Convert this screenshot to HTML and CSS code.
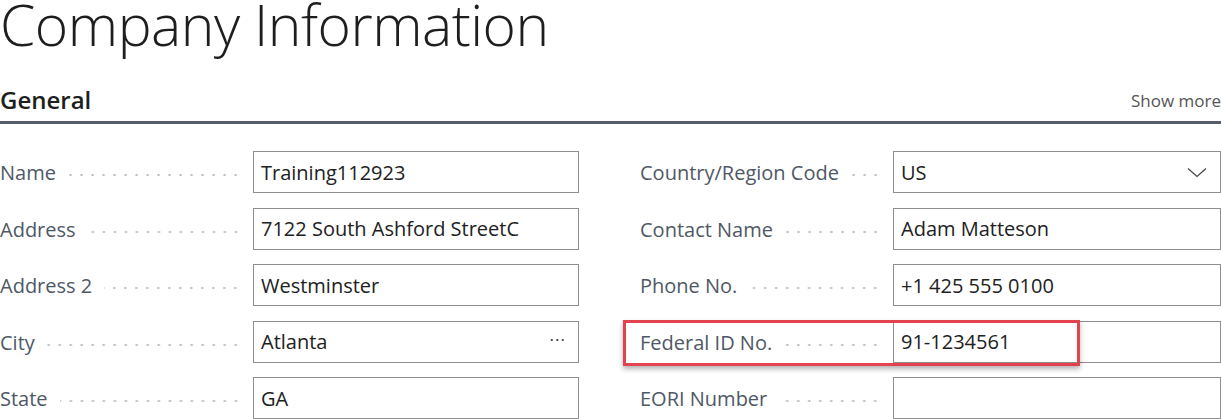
FILE: index.html
```html
<!DOCTYPE html>
<html lang="en">
<head>
    <meta charset="UTF-8">
    <title>Company Information</title>
    <link rel="stylesheet" href="styles.css">
</head>
<body>
    <div class="page">
        <h1 class="title">Company Information</h1>

        <!-- Section header -->
        <div class="section-head">
            <h2>General</h2>
            <span class="show-more">Show more</span>
        </div>

        <div class="fields">
            <!-- Left column -->
            <div class="col">
                <div class="row">
                    <label class="caption"><span>Name</span><i class="dots"></i></label>
                    <div class="box"><span>Training112923</span></div>
                </div>
                <div class="row">
                    <label class="caption"><span>Address</span><i class="dots"></i></label>
                    <div class="box"><span>7122 South Ashford StreetC</span></div>
                </div>
                <div class="row">
                    <label class="caption"><span>Address 2</span><i class="dots"></i></label>
                    <div class="box"><span>Westminster</span></div>
                </div>
                <div class="row">
                    <label class="caption"><span>City</span><i class="dots"></i></label>
                    <div class="box"><span>Atlanta</span><span class="more">···</span></div>
                </div>
                <div class="row">
                    <label class="caption"><span>State</span><i class="dots"></i></label>
                    <div class="box"><span>GA</span></div>
                </div>
            </div>

            <!-- Right column -->
            <div class="col">
                <div class="row">
                    <label class="caption"><span>Country/Region Code</span><i class="dots"></i></label>
                    <div class="box">
                        <span>US</span>
                        <svg class="chevron" width="20" height="11" viewBox="0 0 20 11">
                            <path d="M1 1.5 L10 9.5 L19 1.5" fill="none" stroke="#444" stroke-width="1.2"/>
                        </svg>
                    </div>
                </div>
                <div class="row">
                    <label class="caption"><span>Contact Name</span><i class="dots"></i></label>
                    <div class="box"><span>Adam Matteson</span></div>
                </div>
                <div class="row">
                    <label class="caption"><span>Phone No.</span><i class="dots"></i></label>
                    <div class="box"><span>+1 425 555 0100</span></div>
                </div>
                <div class="row highlighted">
                    <label class="caption"><span>Federal ID No.</span><i class="dots"></i></label>
                    <div class="box"><span>91-1234561</span></div>
                    <div class="mark"></div>
                </div>
                <div class="row">
                    <label class="caption"><span>EORI Number</span><i class="dots"></i></label>
                    <div class="box"></div>
                </div>
            </div>
        </div>
    </div>
</body>
</html>
```

FILE: styles.css
```css
body {
    margin: 0;
    background-color: #fff;
    color: #212121;
    font-family: "Open Sans", "Noto Sans", sans-serif;
    overflow: hidden;
}

.page {
    width: 1221px;
}

.title {
    margin: 0;
    font-size: 57px;
    font-weight: 300;
    line-height: 48px;
    letter-spacing: -0.5px;
    color: #1e1e1e;
}

/* General header with the thick rule */
.section-head {
    display: flex;
    justify-content: space-between;
    align-items: flex-end;
    margin-top: 39px;
    padding-bottom: 8px;
    border-bottom: 3px solid #565e6b;
}

.section-head h2 {
    margin: 0;
    font-size: 24px;
    font-weight: 600;
    line-height: 26px;
    color: #1e1e1e;
}

.show-more {
    font-size: 17px;
    line-height: 24px;
    color: #555;
}

.fields {
    display: grid;
    grid-template-columns: 579px 581px;
    column-gap: 61px;
    margin-top: 27px;
}

.col {
    display: flex;
    flex-direction: column;
    gap: 14.5px;
}

.row {
    position: relative;
    display: flex;
    align-items: center;
    gap: 12px;
    height: 42px;
}

.caption {
    display: flex;
    align-items: center;
    width: 241px;
    flex-shrink: 0;
    font-size: 20px;
    color: #4f5866;
    white-space: nowrap;
}

.caption span {
    margin-top: 1px;
}

/* dotted leader after each caption */
.dots {
    flex: 1;
    height: 4px;
    margin: 6px 0 0 12px;
    background-image: radial-gradient(circle, #bcbcbc 0.9px, transparent 1.4px);
    background-size: 11px 4px;
    background-position: right center;
    background-repeat: repeat-x;
}

.box {
    flex: 1;
    display: flex;
    align-items: center;
    justify-content: space-between;
    height: 42px;
    box-sizing: border-box;
    padding: 0 12px 0 7px;
    border: 1px solid #8e8e8e;
    font-size: 20px;
    color: #212121;
}

.more {
    font-size: 17px;
    letter-spacing: 1px;
    color: #333;
    margin-top: -4px;
}

.chevron {
    margin-right: 1px;
}

/* red annotation frame */
.mark {
    position: absolute;
    left: -17px;
    top: -1px;
    width: 457px;
    height: 46px;
    box-sizing: border-box;
    border: 3px solid #e2434e;
    box-shadow: 0 3px 5px rgba(0, 0, 0, 0.3);
    pointer-events: none;
}
```
